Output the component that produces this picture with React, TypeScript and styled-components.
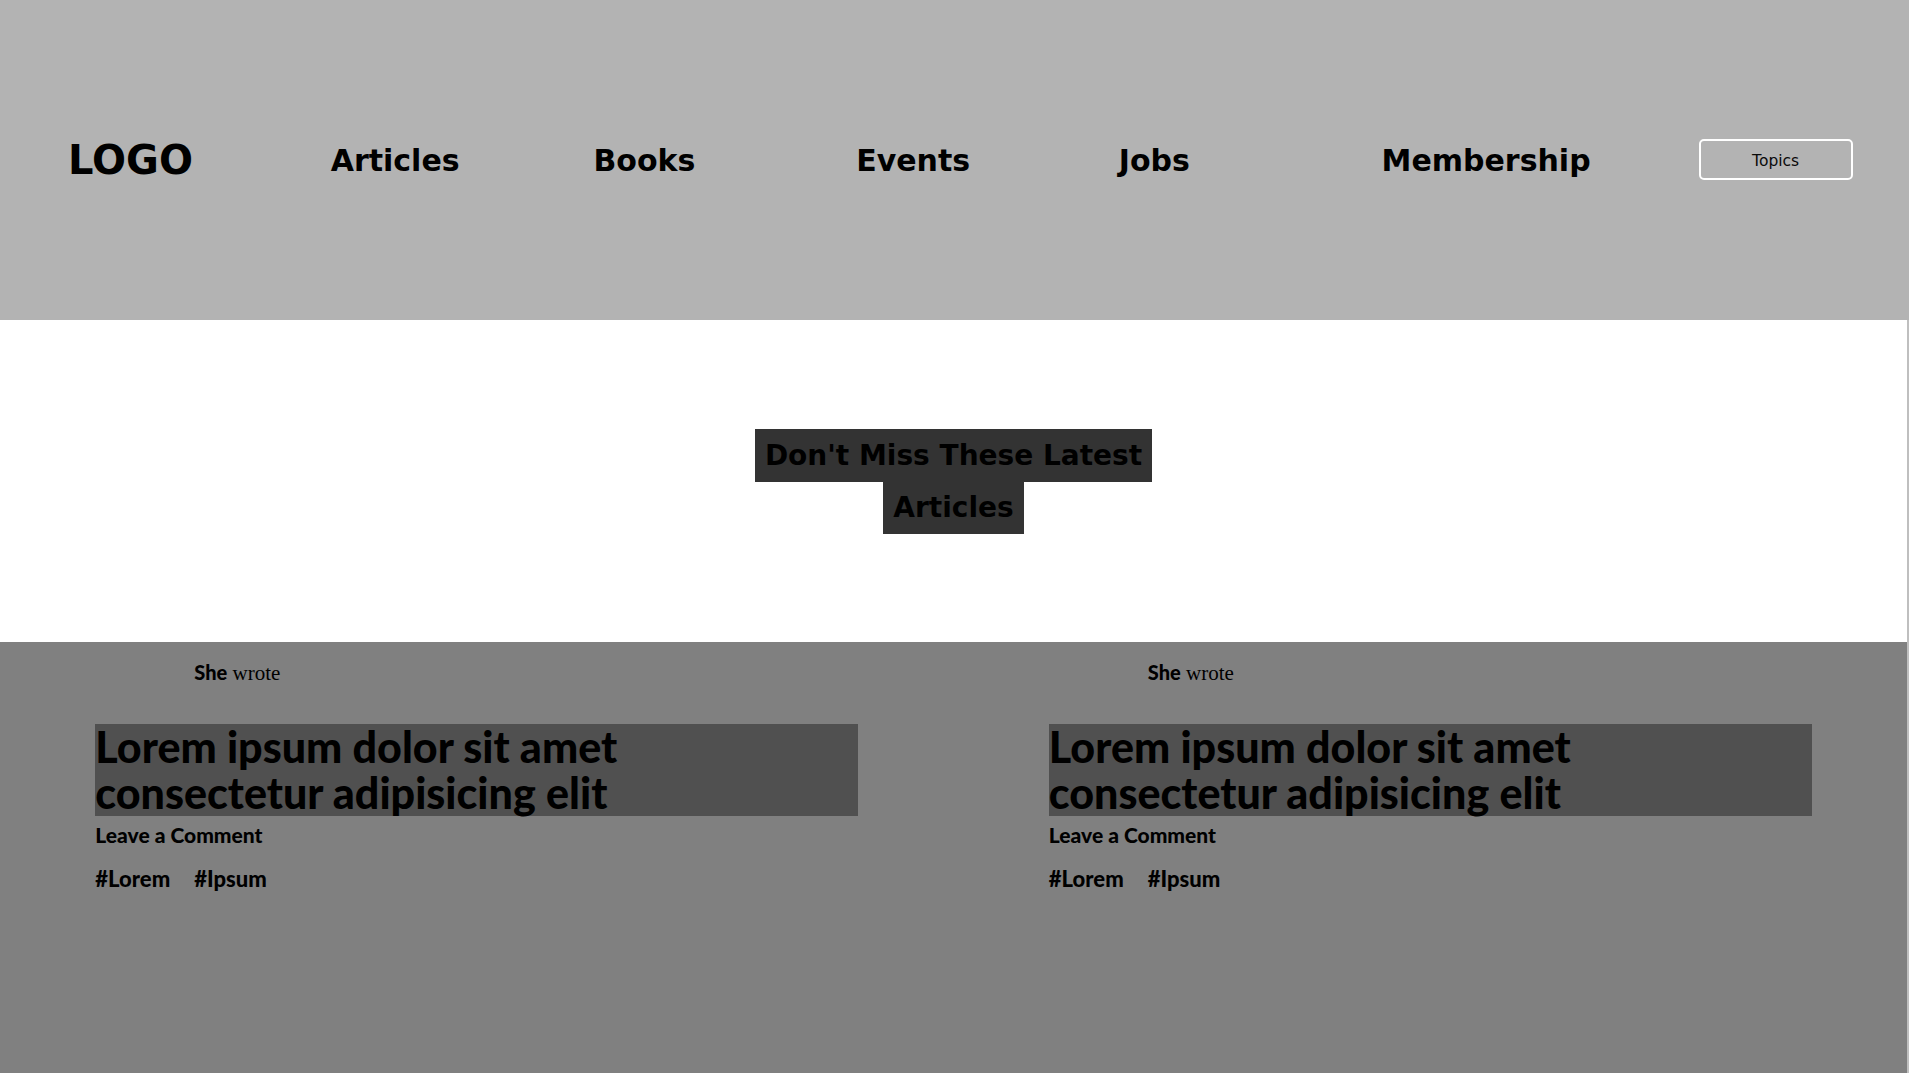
import React from "react";
import styled, { createGlobalStyle } from "styled-components";

const GlobalStyle = createGlobalStyle`
  html, body {
    margin: 0;
    padding: 0;
    background: #bfbfbf;
  }
  body {
    font-family: "DejaVu Sans", sans-serif;
  }
  * { box-sizing: border-box; }
`;

const Header = styled.header`
  display: grid;
  grid-template-columns: repeat(7, 1fr);
  align-items: center;
  height: 320px;
  padding: 0 2px 0 68px;
  background: #b3b3b3;
  font-family: "DejaVu Sans", sans-serif;
  font-weight: 700;
  color: #000;
`;

const Logo = styled.div`
  font-size: 40px;
  justify-self: start;
`;

const NavLink = styled.a`
  font-size: 30px;
  justify-self: start;
  color: #000;
  text-decoration: none;
`;

const TopicsButton = styled.button`
  justify-self: center;
  width: 154px;
  height: 41px;
  margin-top: -1px;
  background: transparent;
  border: 2px solid #ffffff;
  border-radius: 5px;
  font-family: "DejaVu Sans", sans-serif;
  font-weight: 400;
  font-size: 15.5px;
  color: #0a0a0a;
  padding: 2px 0 0;
`;

const Intro = styled.section`
  display: flex;
  align-items: center;
  justify-content: center;
  height: 322px;
  padding-top: 2px;
  margin-right: 2px;
  background: #ffffff;
`;

const Heading = styled.h2`
  width: 420px;
  margin: 0;
  text-align: center;
  font-family: "DejaVu Sans", sans-serif;
  font-weight: 700;
  font-size: 28px;
  line-height: 52px;
  color: #000;
`;

const HeadingText = styled.span`
  background: #333333;
  padding: 10px;
  -webkit-box-decoration-break: clone;
  box-decoration-break: clone;
`;

const CardSection = styled.section`
  display: grid;
  grid-template-columns: 1fr 1fr;
  height: 431px;
  margin-right: 2px;
  background: #808080;
`;

const Card = styled.article`
  padding: 18px 10% 0;
  color: #000;
`;

const Byline = styled.div`
  padding-left: 99px;
  line-height: 24px;
  font-family: "Liberation Serif", serif;
  font-size: 21px;
`;

const Author = styled.strong`
  font-family: Lato, "Noto Sans", sans-serif;
  font-weight: 900;
  font-size: 20px;
`;

const Title = styled.h3`
  margin: 39px 0 5px;
  padding-right: 200px;
  background: #505050;
  font-family: Lato, "Noto Sans", sans-serif;
  font-weight: 900;
  font-size: 43px;
  line-height: 46px;
`;

const Comment = styled.div`
  font-family: Lato, "Noto Sans", sans-serif;
  font-weight: 900;
  font-size: 21px;
  line-height: 28px;
`;

const Tags = styled.div`
  display: flex;
  gap: 24px;
  margin-top: 16px;
  font-family: Lato, "Noto Sans", sans-serif;
  font-weight: 900;
  font-size: 22px;
  line-height: 28px;
`;

const Tag = styled.span``;

const navItems = ["Articles", "Books", "Events", "Jobs", "Membership"];

const cards = [0, 1];

export default function App() {
  return (
    <>
      <GlobalStyle />
      <Header>
        <Logo>LOGO</Logo>
        {navItems.map((item) => (
          <NavLink key={item}>{item}</NavLink>
        ))}
        <TopicsButton>Topics</TopicsButton>
      </Header>
      <Intro>
        <Heading>
          <HeadingText>Don't Miss These Latest Articles</HeadingText>
        </Heading>
      </Intro>
      <CardSection>
        {cards.map((c) => (
          <Card key={c}>
            <Byline>
              <Author>She</Author> wrote
            </Byline>
            <Title>Lorem ipsum dolor sit amet consectetur adipisicing elit</Title>
            <Comment>Leave a Comment</Comment>
            <Tags>
              <Tag>#Lorem</Tag>
              <Tag>#Ipsum</Tag>
            </Tags>
          </Card>
        ))}
      </CardSection>
    </>
  );
}
